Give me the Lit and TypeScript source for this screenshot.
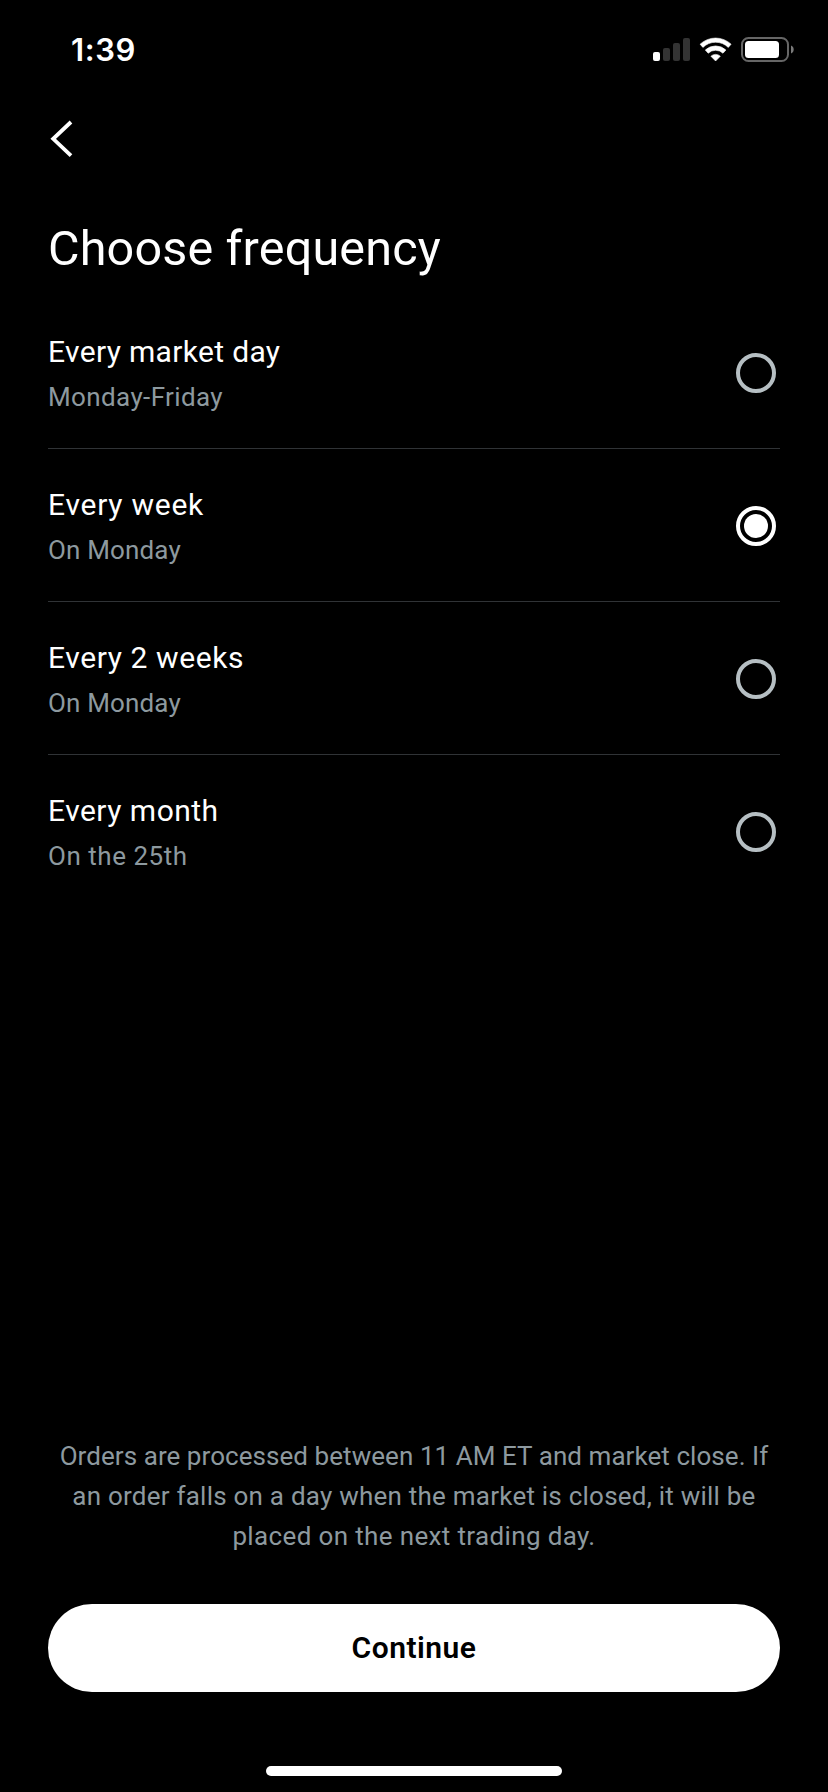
import { LitElement, html, svg, css } from "lit";
import { customElement, property, state } from "lit/decorators.js";
import { classMap } from "lit/directives/class-map.js";

interface Frequency {
  id: string;
  title: string;
  detail: string;
}

const FREQUENCIES: Frequency[] = [
  { id: "daily", title: "Every market day", detail: "Monday-Friday" },
  { id: "weekly", title: "Every week", detail: "On Monday" },
  { id: "biweekly", title: "Every 2 weeks", detail: "On Monday" },
  { id: "monthly", title: "Every month", detail: "On the 25th" },
];

@customElement("status-bar")
class StatusBar extends LitElement {
  static styles = css`
    :host {
      display: flex;
      justify-content: space-between;
      align-items: flex-start;
      height: 100px;
      padding: 30px 33px 0 71px;
      box-sizing: border-box;
    }
    .time {
      font: 600 31px/40px Inter, sans-serif;
      letter-spacing: 0.6px;
      color: #fff;
    }
    .icons {
      display: block;
    }
  `;

  render() {
    const bars = [
      { x: 0, y: 22, h: 9 },
      { x: 10, y: 18, h: 13 },
      { x: 20, y: 13, h: 18 },
      { x: 30, y: 8, h: 23 },
    ];
    return html`
      <span class="time">1:39</span>
      <svg class="icons" width="142" height="40" viewBox="0 0 142 40">
        ${bars.map(
          (b, i) => svg`<rect x=${b.x} y=${b.y} width="7" height=${b.h} rx="2" fill=${i === 0 ? "#fff" : "#333"} />`
        )}
        <g fill="#fff">
          <path d="M47.1 14.2A22.6 22.6 0 0 1 78.1 14.2L75.3 17.4A18.2 18.2 0 0 0 49.9 17.4Z" stroke="#fff" stroke-width="0.6" stroke-linejoin="round" />
          <path d="M52.3 20A15 15 0 0 1 72.9 20L70 23.2A10.8 10.8 0 0 0 55.2 23.2Z" stroke="#fff" stroke-width="0.6" stroke-linejoin="round" />
          <path d="M57.9 26.2A7 7 0 0 1 67.3 26.2L62.6 31Z" stroke="#fff" stroke-width="0.6" stroke-linejoin="round" />
        </g>
        <rect x="89" y="8" width="46" height="23" rx="6.5" fill="none" stroke="#666" stroke-width="2" />
        <rect x="92" y="11" width="34" height="17" rx="3.5" fill="#fff" />
        <path d="M138 15.5C141.6 16.8 141.6 22.2 138 23.5Z" fill="#7a7a7a" />
      </svg>
    `;
  }
}

@customElement("frequency-row")
class FrequencyRow extends LitElement {
  @property({ attribute: false }) option!: Frequency;
  @property({ type: Boolean, reflect: true }) selected = false;

  static styles = css`
    :host {
      display: flex;
      justify-content: space-between;
      align-items: flex-start;
      height: 153px;
      padding: 36px 4px 0 0;
      box-sizing: border-box;
      border-bottom: 1px solid #303336;
    }
    :host(:last-of-type) {
      border-bottom-color: transparent;
    }
    .text {
      display: flex;
      flex-direction: column;
      gap: 7px;
    }
    .title {
      font-size: 30px;
      line-height: 40px;
      color: #fff;
    }
    .detail {
      font-size: 26px;
      line-height: 36px;
      color: #8d999f;
    }
    .daily .title {
      letter-spacing: 0.33px;
    }
    .weekly .title {
      letter-spacing: 0.75px;
    }
    .biweekly .title {
      letter-spacing: 0.6px;
    }
    .monthly .title {
      letter-spacing: 0.48px;
    }
    .daily .detail {
      letter-spacing: 0.38px;
    }
    .weekly .detail,
    .biweekly .detail {
      letter-spacing: 0.15px;
    }
    .monthly .detail {
      letter-spacing: 0.53px;
    }
    .radio {
      display: grid;
      place-items: center;
      width: 40px;
      height: 40px;
      margin-top: 21px;
      box-sizing: border-box;
      border: 4px solid #b6bfc3;
      border-radius: 50%;
    }
    .radio.on {
      border-color: #fff;
    }
    .dot {
      width: 24px;
      height: 24px;
      border-radius: 50%;
      background: #fff;
    }
  `;

  render() {
    return html`
      <div class=${classMap({ text: true, [this.option.id]: true })}>
        <span class="title">${this.option.title}</span>
        <span class="detail">${this.option.detail}</span>
      </div>
      <div class=${classMap({ radio: true, on: this.selected })} role="radio" aria-checked=${this.selected}>
        ${this.selected ? html`<span class="dot"></span>` : null}
      </div>
    `;
  }
}

@customElement("app-root")
class AppRoot extends LitElement {
  @state() private choice = "weekly";

  static styles = css`
    :host {
      display: flex;
      flex-direction: column;
      height: 1792px;
      background: #000;
      color: #fff;
      font-family: Roboto, "Liberation Sans", sans-serif;
    }
    .nav {
      height: 121px;
      padding: 18px 0 0 48px;
      box-sizing: border-box;
    }
    .back {
      display: block;
    }
    main {
      flex: 1;
      padding: 0 48px;
    }
    h1 {
      margin: 0 0 19px;
      font-size: 48.5px;
      font-weight: 400;
      line-height: 56px;
      letter-spacing: 0.17px;
    }
    .note {
      margin: 0 0 48px;
      font-size: 26px;
      line-height: 40px;
      color: #8d999f;
      text-align: center;
    }
    .line {
      display: block;
      white-space: nowrap;
    }
    .first {
      letter-spacing: 0.06px;
    }
    .second {
      letter-spacing: 0.23px;
    }
    .third {
      letter-spacing: 0.36px;
    }
    .continue {
      height: 88px;
      margin: 0 48px 74px;
      padding: 0;
      border: 0;
      border-radius: 44px;
      background: #fff;
      color: #000;
      font: 600 30px/88px Roboto, sans-serif;
      letter-spacing: 0.5px;
    }
    .home {
      width: 296px;
      height: 10px;
      margin: 0 auto 16px;
      border-radius: 5px;
      background: #fff;
    }
  `;

  render() {
    return html`
      <status-bar></status-bar>
      <div class="nav">
        <svg class="back" width="30" height="42" viewBox="0 0 30 42">
          <path d="M23 4L5.2 20.8L23 37.6" fill="none" stroke="#fff" stroke-width="3.8" />
        </svg>
      </div>
      <main>
        <h1>Choose frequency</h1>
        ${FREQUENCIES.map(
          (f) => html`<frequency-row
            .option=${f}
            ?selected=${f.id === this.choice}
            @click=${() => (this.choice = f.id)}
          ></frequency-row>`
        )}
      </main>
      <p class="note">
        <span class="line first">Orders are processed between 11 AM ET and market close. If</span>
        <span class="line second">an order falls on a day when the market is closed, it will be</span>
        <span class="line third">placed on the next trading day.</span>
      </p>
      <button class="continue">Continue</button>
      <div class="home"></div>
    `;
  }
}
